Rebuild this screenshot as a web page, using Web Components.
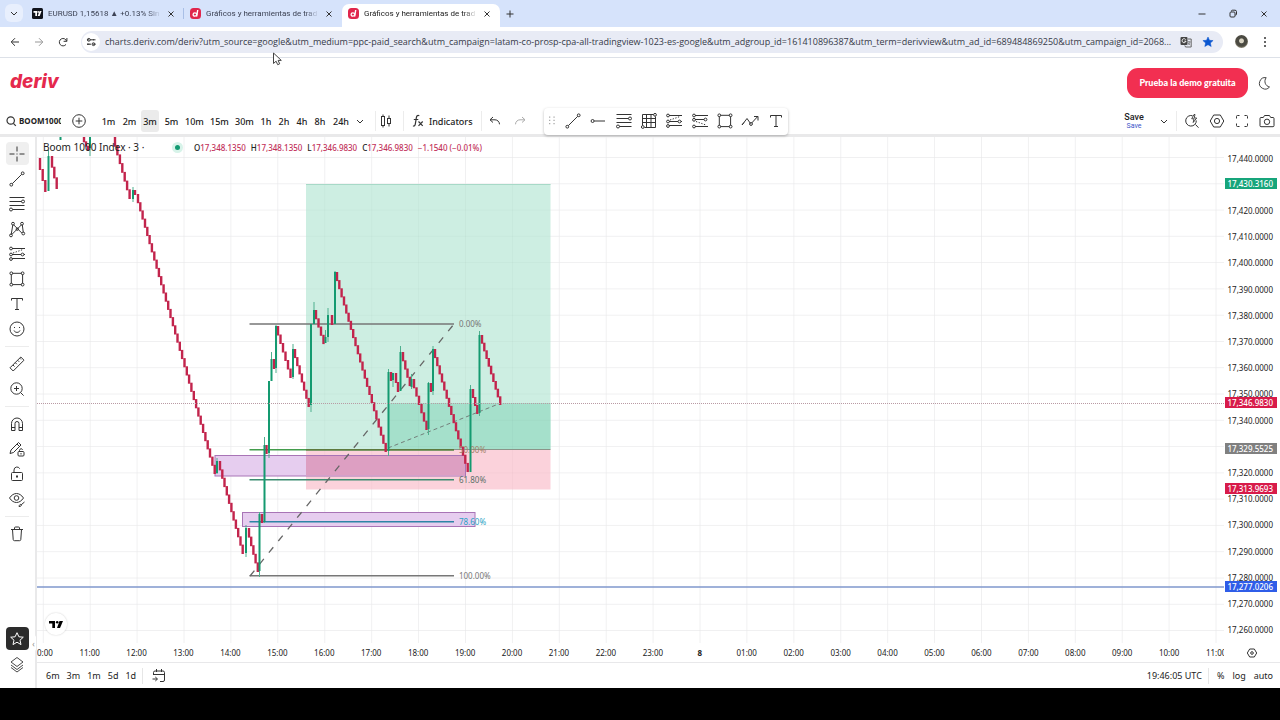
<!DOCTYPE html>
<html lang="es">
<head>
<meta charset="utf-8">
<title>Gráficos y herramientas de trading</title>
<style>
html{background:#000}
body{margin:0;font-family:"Noto Sans","Open Sans",sans-serif;color:#222;-webkit-font-smoothing:antialiased}
</style>
</head>
<body>
<chart-app></chart-app>
<script>
const ICONS={
down:'<path d="M7 9l3 3 3-3"/>',
close:'<path d="M7.5 7.5l5 5M12.5 7.5l-5 5"/>',
plus:'<path d="M10 6.500v7M6.500 10h7"/>',
min:'<path d="M6.500 10h7"/>',
restore:'<rect x="7" y="8" width="5" height="5" rx="1"/><path d="M8.500 7.500V7a.8.8 0 01.8-.8H12a1.500 1.500 0 011.500 1.500v2.500a.8.8 0 01-.8.8h-.4"/>',
back:'<path d="M14 10H6.500M10 6.200L6.200 10l3.800 3.800"/>',
fwd:'<path d="M6 10h7.500M10 6.200l3.800 3.800-3.800 3.800"/>',
reload:'<path d="M13.600 9.200a3.700 3.700 0 10-.6 3.200M13.900 6v3.300h-3.300"/>',
tune:'<path d="M6 7.800h2M12 7.800h2.500M11.800 12.200h2.700M6 12.200h2.500"/><circle cx="7.800" cy="7.800" r="1.400"/><path d="M9 7.800h4M6 12.200h4"/><circle cx="12.500" cy="12.200" r="1.400"/>',
translate:'<rect x="4.500" y="5" width="7" height="8" rx="1" fill="#444" stroke="none"/><path d="M9.800 7.700a2 2 0 10.2 1.500H8.300" stroke="#fff" stroke-width=".9"/><path d="M12 7h3.200v8H9.500l-.7-1.600" stroke="#666"/><path d="M11.300 9.800h3.200M13 9v.8M14 9.900c-.4 1.500-1.300 2.500-2.300 3M12 10.500c.4 1 1.200 2 2.200 2.500" stroke="#666" stroke-width=".7"/>',
starfull:'<path d="M10 5l1.500 3.300 3.600.3-2.700 2.400.8 3.500L10 12.700l-3.200 1.800.8-3.500-2.700-2.400 3.600-.3z" fill="#0b57d0" stroke="#0b57d0" stroke-width=".5"/>',
kebab:'<g fill="#333" stroke="none"><circle cx="10" cy="6" r="1"/><circle cx="10" cy="10" r="1"/><circle cx="10" cy="14" r="1"/></g>',
moon:'<path d="M12.200 4.700a5.700 5.700 0 103.300 9.300 5.800 5.800 0 01-3.300-9.300z" stroke="#444" stroke-linejoin="round"/>',
search:'<circle cx="9.700" cy="9.500" r="3.700" stroke-width="1.200"/><path d="M12.400 12.300l2.400 2.500" stroke-width="1.200"/>',
addc:'<circle cx="10" cy="10" r="6.300"/><path d="M10 6.700v6.600M6.700 10h6.600"/>',
candles:'<rect x="5.500" y="5.500" width="3" height="9"/><path d="M7 3.500v2M7 14.500v2M13 4.500v3M13 12.500v3"/><rect x="11.500" y="7.500" width="3" height="5"/>',
fx:'<path d="M11.300 4.700c-2-.9-2.700.4-3 2.200l-1 6.300c-.3 1.700-1.100 2.200-2.300 1.600M5.800 8.500h4.500M10.500 10.500l4.200 4.300M14.700 10.500l-4.200 4.300" stroke-width="1.200"/>',
undo:'<path d="M8 6L5 8.800 8 11.500M5.200 8.800H10a4.500 4.500 0 014.500 4.500"/>',
redo:'<path d="M12 6l3 2.800-3 2.700M14.800 8.800H10a4.500 4.500 0 00-4.500 4.500" stroke="#aaa"/>',
grip:'<g fill="#aaa" stroke="none"><path d="M7 5.500h1.300v1.300H7zM7 8.700h1.300V10H7zM7 11.900h1.300v1.300H7zM11.400 5.500h1.300v1.300h-1.300zM11.400 8.700h1.300V10h-1.300zM11.400 11.900h1.300v1.300h-1.300z"/></g>',
line:'<path d="M5.300 14.700l9.400-9.400"/><circle cx="4.300" cy="15.700" r="1.400"/><circle cx="15.700" cy="4.300" r="1.400"/>',
hline:'<circle cx="4.600" cy="10" r="1.500"/><path d="M6.100 10H17"/>',
fib:'<path d="M2.500 3.500h15M2.500 7.500h12M2.500 11.500h15M5.500 15.500h12"/><circle cx="16" cy="7.500" r="1.500"/><circle cx="4" cy="15.500" r="1.500"/>',
grid:'<path d="M3.500 3.500h11M3.500 3.500v11M3.500 7.500h13M3.500 11.500h13M5.500 16.500h11v-11M7.500 3.500v13M12 3.500v13"/><circle cx="16" cy="3.800" r="1.400"/><circle cx="3.800" cy="16" r="1.400"/>',
longpos:'<path d="M5 4.500h13M5 10.500h9M17 10.500h1M5 14.500h13"/><circle cx="4" cy="4.500" r="1.400"/><circle cx="4" cy="10.500" r="1.400"/><circle cx="15.500" cy="10.500" r="1.400"/><circle cx="4" cy="15" r="1.400"/><path d="M6 9l10-3.500" stroke-dasharray="1.300 1.500"/>',
shortpos:'<path d="M5 4.500h13M5 8.500h9M5 15.500h13"/><circle cx="4" cy="4.500" r="1.400"/><circle cx="4" cy="8.800" r="1.400"/><circle cx="15.500" cy="8.500" r="1.400"/><circle cx="4" cy="15.500" r="1.400"/><path d="M6 10.500l10 3.500" stroke-dasharray="1.300 1.500"/>',
rect:'<path d="M5.500 4.300h9M15.600 5.500v9M5.500 15.600h9M4.300 5.500v9"/><circle cx="4.300" cy="4.300" r="1.400"/><circle cx="15.600" cy="4.300" r="1.400"/><circle cx="4.300" cy="15.600" r="1.400"/><circle cx="15.600" cy="15.600" r="1.400"/>',
zig:'<path d="M2 14l5-6.500 3.500 5M11.700 12l6-6.500M14 5.500h4v4"/><circle cx="11" cy="13" r="1.400"/><path d="M2 14l2-2.500"/>',
text:'<path d="M4.500 6.500v-2h11v2M10 4.500v11M8 15.500h4"/>',
cross:'<path d="M10 2.500v5M10 12.500v5M2.500 10h5M12.500 10h5M9.500 10h1"/>',
pattern:'<path d="M4.200 15.500L5.800 6M6.500 5.700l8.300 8.300M5 15.300l9.500-9.500M15.300 6l1 7.500"/><circle cx="6" cy="4.700" r="1.400"/><circle cx="15" cy="4.700" r="1.400"/><circle cx="4" cy="16.400" r="1.400"/><circle cx="16.300" cy="14.500" r="1.400"/><circle cx="10.300" cy="10.200" r="1.200"/>',
smile:'<circle cx="10" cy="10" r="7"/><path d="M7 11.500c1 2.500 5 2.500 6 0M7.500 8v1M12.500 8v1"/>',
ruler:'<path d="M3 13.800L13.800 3l3.200 3.200L6.200 17zM6 11l1.500 1.500M8.300 8.700l1.500 1.500M10.700 6.300l1.500 1.500M12.800 4.200l1.200 1.200" stroke-linejoin="round"/>',
zoom:'<circle cx="9.500" cy="9.500" r="5.700"/><path d="M13.600 13.600l3 3M9.500 7v5M7 9.500h5"/>',
magnet:'<path d="M4.500 16.500V9.500a5.500 5.500 0 0111 0v7h-3.500v-7a2 2 0 00-4 0v7zM4.500 13.500H8M12 13.500h3.500"/>',
pencil:'<path d="M3 14.500l1-3.500 7.500-7.500 2.500 2.500L6.500 13.500z"/><path d="M10 5l2.500 2.500"/><rect x="11" y="12.500" width="6" height="4.500" rx="1"/><path d="M12.500 12.500v-1.200a1.700 1.700 0 013.200-.6M14 14v1.500"/>',
lock:'<rect x="4.500" y="8.500" width="11" height="8" rx="1"/><path d="M7 8.500V6a3 3 0 015.700-1.300"/><path d="M10 11.500v2" stroke-width="2"/>',
eye:'<path d="M2.500 9c4-6 10-6 14 0-4 6-10 6-14 0z" stroke-linejoin="round"/><circle cx="9.500" cy="9" r="2.300"/><path d="M12 17.500c.3-2 1.300-2.300 2.500-2 .2 1.200-.7 2-2.500 2zM14.500 15.500l3-2.500"/>',
trash:'<path d="M4 5.500h12M7.500 5.500v-1.500a1 1 0 011-1h3a1 1 0 011 1v1.500M5.500 5.500l.7 10a1.300 1.300 0 001.300 1.200h5a1.300 1.300 0 001.300-1.200l.7-10"/>',
star:'<path d="M10 3.700l1.900 4.100 4.400.4-3.300 3 1 4.400-4-2.400-4 2.400 1-4.400-3.300-3 4.400-.4z" stroke="#fff" stroke-linejoin="round"/>',
layers:'<path d="M4 8l6-4.500L16 8l-6 4.500zM4 11l6 4.500 6-4.500M4 13.500l2 1.500 4 3 4-3 2-1.500" stroke-linejoin="round" stroke-width=".9"/>',
quick:'<path d="M10.500 4.700A5.300 5.300 0 1014.300 9.500M13.500 13.500l3 3.200" /><path d="M12 3.500l-2.300 4.300h2.300l-.8 3.700 3.500-4.500h-2.500L13 3.500z" stroke-width=".9" stroke-linejoin="round"/>',
gear:'<path d="M6.700 4h6.600l3.500 6-3.500 6H6.700l-3.500-6z" stroke-linejoin="round"/><circle cx="10" cy="10" r="2.600"/>',
smallgear:'<path d="M7.700 6h4.600l2.400 4-2.400 4H7.700l-2.400-4z" stroke-linejoin="round"/><circle cx="10" cy="10" r="1.300"/>',
full:'<path d="M4.500 7.500v-2a1 1 0 011-1h2M12.500 4.500h2a1 1 0 011 1v2M15.500 12.500v2a1 1 0 01-1 1h-2M7.500 15.500h-2a1 1 0 01-1-1v-2"/>',
camera:'<path d="M7.500 4.500h5l1.200 2h2.300a1 1 0 011 1v7.200a1 1 0 01-1 1H4a1 1 0 01-1-1V7.500a1 1 0 011-1h2.300z"/><circle cx="10" cy="10.800" r="2.700"/>',
calendar:'<path d="M4.500 9V6.500a1.500 1.500 0 011.500-1.500h8a1.500 1.500 0 011.500 1.500V14a1.500 1.500 0 01-1.500 1.500h-3M4.500 8.500h11M7.500 3v3M12.500 3v3M3.500 13h4.700M6.300 11l2.200 2-2.200 2"/>'
};
const define=(name,render)=>customElements.define(name,class extends HTMLElement{
 connectedCallback(){if(this.shadowRoot)return;const t=document.createElement('template');t.innerHTML=render(this);this.attachShadow({mode:'open'}).append(t.content.cloneNode(true));}
});
const BASE=`*{box-sizing:border-box}button{font:inherit;color:inherit;background:none;border:0;padding:0;margin:0;display:flex;align-items:center;justify-content:center}`;
const btn=(icon,label,cls='')=>`<button class="${cls}" aria-label="${label}"><ui-icon name="${icon}"></ui-icon></button>`;

define('ui-icon',el=>`<style>:host{display:block;width:20px;height:20px;flex:none;color:#333}svg{display:block}</style>
<svg width="20" height="20" viewBox="0 0 20 20" fill="none" stroke="currentColor" stroke-width="1" aria-hidden="true">${ICONS[el.getAttribute('name')]}</svg>`);

define('deriv-mark',()=>`<style>:host{display:block;width:11px;height:11px;flex:none}svg{display:block}</style>
<svg width="11" height="11" viewBox="0 0 11 11" aria-hidden="true"><rect width="11" height="11" rx="3.500" fill="#e0264c"/><ellipse cx="4.900" cy="6.500" rx="1.800" ry="1.700" fill="none" stroke="#fff" stroke-width="1.300"/><path d="M7.700 2L6.700 8.500" stroke="#fff" stroke-width="1.400"/></svg>`);

define('tv-mark',()=>`<style>:host{display:block;width:11px;height:11px;flex:none}svg{display:block}</style>
<svg width="11" height="11" viewBox="0 0 11 11" aria-hidden="true"><rect width="11" height="11" rx="1.500" fill="#10131c"/><path d="M1.500 3h3.500v5H3.300V4.800H1.500z" fill="#fff"/><circle cx="6.200" cy="3.900" r=".9" fill="#fff"/><path d="M7.600 3h2L7.700 8h-2z" fill="#fff"/></svg>`);

define('browser-tab',el=>`<style>${BASE}
:host{display:flex;align-items:center;width:158px;height:23px;padding:0 3px 4px 6px;position:relative;font-family:Roboto,sans-serif;font-size:8px;color:#3c4254}
:host([active]){background:#fff;border-radius:7px 7px 0 0;color:#222}
:host([divided])::after{content:"";position:absolute;right:0;top:4px;width:1px;height:11px;background:#a9bfe6}
.t{flex:1;margin-left:5px;white-space:nowrap;overflow:hidden;-webkit-mask-image:linear-gradient(90deg,#000 88%,transparent)}
</style><slot name="icon"></slot><span class="t"><slot></slot></span>${btn('close','Cerrar pestaña')}`);

define('tab-strip',()=>`<style>${BASE}
:host{display:flex;align-items:flex-end;height:27px;background:#d6e3fb;padding-right:6px}
.menu{width:18px;height:18px;border-radius:6px;background:#e8effd;margin:0 3px 5px 5px}
.tabs{display:flex}.new{height:19px;margin:0 auto 4px 0}
.win{display:flex;gap:11px;height:23px;padding-bottom:4px}
</style><button class="menu" aria-label="Buscar pestañas"><ui-icon name="down"></ui-icon></button>
<div class="tabs"><browser-tab divided><tv-mark slot="icon"></tv-mark>EURUSD 1,15618 ▲ +0.13% Sin</browser-tab>
<browser-tab><deriv-mark slot="icon"></deriv-mark>Gráficos y herramientas de trad</browser-tab>
<browser-tab active><deriv-mark slot="icon"></deriv-mark>Gráficos y herramientas de trad</browser-tab></div>
${btn('plus','Nueva pestaña','new')}
<div class="win">${btn('min','Minimizar')}${btn('restore','Restaurar')}${btn('close','Cerrar')}</div>`);

define('address-bar',()=>`<style>${BASE}
:host{display:flex;align-items:center;height:31px;padding:0 5px 1px 5px;background:#fff;border-bottom:1px solid #dde1e8;position:relative}
.nav{display:flex;gap:4px;margin-right:8px}
.nav button:nth-child(2){opacity:.5}
.pill{flex:1;display:flex;align-items:center;height:22px;border-radius:11px;background:#e8ebf5;padding:0 5px 0 1px;min-width:0}
.site{width:18px;height:18px;border-radius:9px;background:#fff;margin-right:5px}
input{flex:1;min-width:0;border:0;background:none;padding:0;font-family:"Open Sans",sans-serif;font-size:9px;color:#363a48;height:20px;outline:0;text-overflow:ellipsis}
.pill button+button{margin-left:2px}
.me{width:13px;height:13px;border-radius:50%;background:radial-gradient(circle at 50% 45%,#d9d4c4 0 20%,#4b4a42 30% 55%,#85806e 70%);margin:0 7px 0 12px}
.cursor{position:absolute;left:272px;top:25px}
</style><div class="nav">${btn('back','Atrás')}${btn('fwd','Adelante')}${btn('reload','Recargar')}</div>
<div class="pill"><button class="site" aria-label="Información del sitio"><ui-icon name="tune"></ui-icon></button>
<input aria-label="Dirección" value="charts.deriv.com/deriv?utm_source=google&amp;utm_medium=ppc-paid_search&amp;utm_campaign=latam-co-prosp-cpa-all-tradingview-1023-es-google&amp;utm_adgroup_id=161410896387&amp;utm_term=derivview&amp;utm_ad_id=689484869250&amp;utm_campaign_id=2068...">
${btn('translate','Traducir')}${btn('starfull','Favorito')}</div>
<button class="me" aria-label="Perfil"></button>${btn('kebab','Menú')}
<svg class="cursor" width="10" height="14" viewBox="0 0 10 14" aria-hidden="true"><path d="M1.500 1v10.500l2.600-2.300 1.600 3.500 2-.9-1.600-3.400h3.200z" fill="#fff" stroke="#444"/></svg>`);

define('site-header',()=>`<style>${BASE}
:host{display:flex;align-items:center;justify-content:space-between;height:50px;padding:0 6px 0 10px}
a{font:italic 800 19px/24px Inter,sans-serif;color:#e5294d;text-decoration:none;padding-bottom:2px}
.r{display:flex;align-items:center;gap:6px}
.cta{height:30px;width:121px;border-radius:11px;background:#f22f51;color:#fff;font:900 9px/12px Lato,sans-serif}
</style><a href="#">deriv</a><div class="r"><button class="cta">Prueba la demo gratuita</button>${btn('moon','Modo oscuro')}</div>`);

define('chart-toolbar',()=>`<style>${BASE}
:host{display:flex;align-items:center;height:29px;border-bottom:3px solid #e9e9ea;padding:0 3px 0 1px;font-size:9px;font-weight:500}
.sym{width:60px;justify-content:flex-start;font:700 9px/14px "Noto Sans",sans-serif;overflow:hidden;white-space:nowrap}
.sym span{margin-left:-2px;font-size:8px}
.add{margin:0 9px 0 8px}
.iv{display:flex}.iv button{height:22px;width:21px;border-radius:3px}
.iv .w{width:25px}.iv .h{width:18px}.iv .d{width:24px}
.iv .on{background:#ebebeb;width:18px;margin:0 2px 0 1px}
.sep{width:1px;height:20px;background:#ececec}
.a{margin-left:-3px}.b{margin:0 4px 0 7px}.c{margin:0 0 0 5px}
.ind{margin:0 8px 0 1px}
.un{display:flex;gap:5px;margin:0 14px 0 3px}
.float{display:flex;align-items:center;height:27px;width:244px;background:#fff;border-radius:4px;box-shadow:0 1px 3px #0004;position:relative;justify-content:space-between;padding:0 2px}
.float button:first-child{margin-right:-4px;margin-left:-4px}
.r{display:flex;align-items:center;margin-left:auto}
.save{flex-direction:column;font-family:Roboto,sans-serif;line-height:10px;margin-right:10px;width:20px}.save small{font-size:7px;font-weight:400;color:#3a55c9;line-height:9px}
.q{display:flex;gap:5px;margin-left:5px}.r .sep{margin-left:2px}
</style>
<button class="sym"><ui-icon name="search"></ui-icon><span>BOOM1000</span></button>${btn('addc','Comparar','add')}
<div class="iv">${['1m','2m','3m','5m','10m','15m','30m','1h','2h','4h','8h','24h'].map(t=>`<button class="${t=='3m'?'on':t=='24h'?'d':/h/.test(t)?'h':t.length>2?'w':''}">${t}</button>`).join('')}</div>
${btn('down','Más intervalos','a')}
<i class="sep c"></i>${btn('candles','Velas')}<i class="sep b"></i>
${btn('fx','Funciones')}<button class="ind">Indicators</button><i class="sep"></i>
<div class="un">${btn('undo','Deshacer')}${btn('redo','Rehacer')}</div>
<div class="float">${['grip','line','hline','fib','grid','longpos','shortpos','rect','zig','text'].map(n=>btn(n,n)).join('')}</div>
<div class="r"><button class="save"><span>Save</span><small>Save</small></button>${btn('down','Opciones de guardado')}<i class="sep"></i>
<div class="q">${btn('quick','Búsqueda rápida')}${btn('gear','Ajustes')}${btn('full','Pantalla completa')}${btn('camera','Captura')}</div></div>`);

define('draw-rail',()=>`<style>${BASE}
:host{display:flex;flex-direction:column;align-items:center;width:37px;border-right:2px solid #e9e9ea;padding:4px 1px 12px 0;position:relative}
button{width:23px;height:25px;border-radius:4px;flex:none}
.on{background:#efefef;height:23px;margin:1px 0}
hr{width:24px;border:0;border-top:1px solid #ececec;margin:5px 0 4px}
.fav{background:#2c2c2c;margin-top:auto;height:23px;margin-bottom:1px}
.fold{position:absolute;right:-1px;bottom:37px;width:5px;height:16px;font-size:8px;color:#888;background:#fff}
</style>${btn('cross','Cursor','on')}${['line','fib','pattern','longpos','rect','text','smile'].map(n=>btn(n,n)).join('')}<hr>
${['ruler','zoom'].map(n=>btn(n,n)).join('')}<hr>${['magnet','pencil','lock','eye'].map(n=>btn(n,n)).join('')}<hr>${btn('trash','Eliminar')}
${btn('star','Favoritos','fav')}${btn('layers','Objetos')}<button class="fold" aria-label="Plegar">‹</button>`);

/* Runs of falling candles: [x0,y0,x1,y1]. */
const FALLS=[[39,158,47,191],[51,156,58,188],[83,137,89,150],[114,137,131,198],[134,190,137,194],[137,194,216,473],[219,461,244,553],[248,528,259,571],[261,514,263.500,522],[265.500,445,268,453],[273,359,275.500,368],[277,326,292,377],[294,349,310,406],[315,310,325,343],[331,315,334,324],[336,272,387,451],[390,372,392.500,380],[395,373,399,391],[402,352,411,385],[413,379,428,429],[430,383,432.500,391],[434,349,469,471],[472,389,478.500,413],[481,335,501.500,404]];
/* Rising candles: [x,top,bottom,wickTop,wickBottom]. */
const RISES=[[48.500,156,191,150,191],[60.500,137,140,137,140],[90,137,148,137,156],[133,190,199,187,202],[217,461,473,458,474],[246,528,553,525,557],[259.500,514,571,512,577],[264.500,445,522,437,523],[269,381,453,381,458],[271.500,359,381,352,381],[276,326,368,325,373],[293,349,377,344,379],[311,324,405,324,412],[314,310,324,302,324],[325.500,337,343,330,343],[328,315,337,308,342],[335,272,324,271,324],[388.500,372,451,369,456],[393,373,380,373,387],[400.500,352,391,346,391],[411.500,379,387,374,389],[428.500,383,429,382,435],[433,349,391,346,395],[470.500,389,472,385,472],[479.500,335,413,331,416]];
const drawCandles=()=>{let s='';
 for(const [x0,y0,x1,y1] of FALLS){const n=Math.max(1,Math.round((x1-x0)/2.345));for(let i=0;i<n;i++){s+=`<rect x="${(x0+i*(x1-x0)/n-.2).toFixed(1)}" y="${(y0+i*(y1-y0)/n).toFixed(1)}" width="2.400" height="${((y1-y0)/n+1).toFixed(1)}" fill="#c2244c"/>`}}
 for(const [x,t,b,wt,wb] of RISES)s+=`<path d="M${x} ${wt}V${wb}" stroke="#4faf8e"/><rect x="${x-1}" y="${t}" width="2" height="${b-t}" fill="#149a70"/>`;
 return s};
const drawGrid=()=>{let s='';for(let i=0;i<26;i++)s+=`M${(43.300+46.910*i).toFixed(1)} 137V643`;for(let i=0;i<19;i++)s+=`M37 ${(157.500+26.280*i).toFixed(1)}H1224`;return s};
const pct=y=>((y-137)/506*100).toFixed(2)+'%';

define('price-chart',()=>`<style>${BASE}
:host{display:grid;grid-template-columns:minmax(0,1fr) 56px;grid-template-rows:minmax(506px,1fr) 19px;font-size:8px;color:#222}
.plot{position:relative;overflow:hidden}
.plot svg.c{display:block;position:absolute;width:100%;height:100%}
.legend{position:absolute;left:6px;top:3px;display:flex;align-items:center;white-space:nowrap;line-height:15px;font-weight:500}
.legend b{font-weight:400;font-size:10px;width:132px}
.dot{width:5px;height:5px;border-radius:50%;background:#139a72;box-shadow:0 0 0 3px #d7f3e9;margin-right:14px}
.legend span{margin-right:5px;color:#222}.legend em{font-style:normal;color:#c2315a}
.lv{position:absolute;left:35.550%;line-height:10px;margin-top:-5px;color:#777}
.tv{position:absolute;left:8px;bottom:8px;width:22px;height:22px;border-radius:50%;background:#fff;box-shadow:0 0 2px #0003;display:flex;align-items:center;justify-content:center}
.prices{position:relative;display:flex;flex-direction:column;padding:8px 7px 0 0}
.prices span{flex:1;display:flex;align-items:center;justify-content:flex-end}
.prices mark{position:absolute;left:1px;right:3px;height:11px;margin-top:-6px;padding-right:4px;text-align:right;line-height:11px;color:#fff;font-weight:500}
.times{overflow:hidden;padding-bottom:1px}
.row{display:flex;width:102.800%;margin-left:-1.500%;height:18px;align-items:center}.row span{flex:1;text-align:center}
.row .day{font-weight:700}
.cfg{justify-content:center}
</style>
<div class="plot"><svg class="c" viewBox="37 137 1187 506" preserveAspectRatio="none" role="img" aria-label="Boom 1000 Index">
<path d="${drawGrid()}" stroke="#f6f6f7" fill="none"/>
<path d="M306 184h244.500v265H306z" fill="#cdeee2"/><path d="M388 403h162.500v46H388z" fill="#a5e0cb"/><path d="M306 449h244.500v40.500H306z" fill="#fbd2db"/>
<path d="${drawGrid()}" stroke="#00000006" fill="none"/>
<path d="M306 184.500h244.500" stroke="#a7d9c7"/><path d="M306 449.500h244.500" stroke="#8b9489"/>
<rect x="215" y="455.500" width="250.500" height="20.500" fill="#e6cdef" stroke="#a874b6"/><rect x="306" y="456" width="159" height="19.500" fill="#dd9fc2"/>
<rect x="242.500" y="512.500" width="232.500" height="14" fill="#e6cdef" stroke="#a874b6"/>
<g stroke-width="1.400"><path d="M249.500 324H454M249.500 575.800H454" stroke="#777"/><path d="M249.500 449.800H454" stroke="#439c4c"/><path d="M306 449.800H454" stroke="#5d7a3e"/><path d="M249.500 479.800H454" stroke="#3b8c70"/><path d="M249.500 521.800H454" stroke="#2d85a5"/></g>
<path d="M250 576L454 324" stroke="#666" stroke-width="1.300" stroke-dasharray="7 8" fill="none"/>
<path d="M388 448L501 403" stroke="#666" stroke-width=".8" stroke-dasharray="4 3" fill="none"/>
${drawCandles()}
<path d="M37 403.500H1224" stroke="#b99aa4" stroke-dasharray="1 1"/><path d="M37 587H1224" stroke="#7f97cc" stroke-width="1.500"/>
</svg>
<div class="legend"><b>Boom 1000 Index · 3 ·</b><i class="dot"></i><span>O<em>17,348.1350</em></span><span>H<em>17,348.1350</em></span><span>L<em>17,346.9830</em></span><span>C<em>17,346.9830</em></span><em>−1.1540 (−0.01%)</em></div>
<span class="lv" style="top:${pct(324)}">0.00%</span><span class="lv" style="top:${pct(450)};color:#a08068">50.00%</span><span class="lv" style="top:${pct(480)};color:#5c7069">61.80%</span><span class="lv" style="top:${pct(522)};color:#2ba3c4">78.60%</span><span class="lv" style="top:${pct(576)}">100.00%</span>
<a class="tv" href="#" aria-label="TradingView"><svg width="15" height="9" viewBox="0 0 15 9"><path d="M0 1h6v7H3.300V3.600H0z"/><circle cx="8.200" cy="2.300" r="1.300"/><path d="M10.500 1H14l-3 7H8z"/></svg></a></div>
<div class="prices">${Array.from({length:19},(_,i)=>17440-i*10).map(p=>`<span>${p==17430||p==17330?'':p.toLocaleString('en-US')+'.0000'}</span>`).join('')}
<mark style="top:${pct(184)};background:#16a57b">17,430.3160</mark><mark style="top:${pct(403)};background:#d81b4a">17,346.9830</mark><mark style="top:${pct(449)};background:#808080">17,329.5525</mark><mark style="top:${pct(489.500)};background:#d81b4a">17,313.9693</mark><mark style="top:${pct(587)};background:#2f5de8">17,277.0206</mark></div>
<div class="times"><div class="row">${Array.from({length:26},(_,i)=>{const h=(10+i)%24;return h?`<span>${String(h).padStart(2,'0')}:00</span>`:'<span class="day">8</span>'}).join('')}</div></div>
${btn('smallgear','Ajustes de escala','cfg')}`);

define('range-bar',()=>`<style>${BASE}
:host{display:flex;align-items:center;height:26px;border-top:1px solid #e8e8ea;padding:0 7px 0 9px;font-size:9px}
.g{display:flex;gap:7px}.sep{width:1px;height:16px;background:#e6e6e6;margin:0 6px}
.r{display:flex;align-items:center;margin-left:auto;gap:8px}.r .sep{margin:0 0 0 -2px}
</style><div class="g">${['6m','3m','1m','5d','1d'].map(t=>`<button>${t}</button>`).join('')}</div><i class="sep"></i>${btn('calendar','Ir a')}
<div class="r"><button>19:46:05 UTC</button><i class="sep"></i><button>%</button><button>log</button><button>auto</button></div>`);

define('chart-app',()=>`<style>*{box-sizing:border-box}
:host{display:flex;flex-direction:column;min-height:100vh;background:#fff;border-bottom:32px solid #000;box-sizing:border-box}
main{flex:1;display:flex}.col{flex:1;min-width:0;display:flex;flex-direction:column}price-chart{flex:1}
</style><tab-strip></tab-strip><address-bar></address-bar><site-header></site-header><chart-toolbar></chart-toolbar>
<main><draw-rail></draw-rail><div class="col"><price-chart></price-chart><range-bar></range-bar></div></main>`);
</script>
</body>
</html>
